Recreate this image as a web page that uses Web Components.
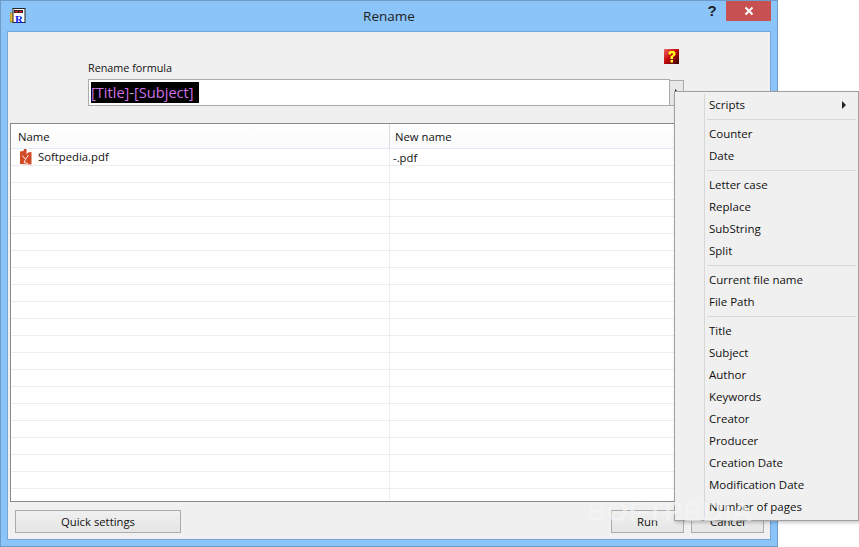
<!DOCTYPE html>
<html>
<head>
<meta charset="utf-8">
<title>Rename</title>
<style>
  html, body { margin: 0; padding: 0; background: #fff; }
  body { width: 859px; height: 547px; overflow: hidden; position: relative; font: 11.3px "Open Sans", "Liberation Sans", sans-serif; color: #111; }
</style>
</head>
<body>
<app-window>
  <title-bar slot="title" caption="Rename"></title-bar>
  <rename-form></rename-form>
  <file-list></file-list>
  <button-bar></button-bar>
</app-window>
<popup-menu>
  <menu-item arrow>Scripts</menu-item>
  <menu-sep></menu-sep>
  <menu-item>Counter</menu-item>
  <menu-item>Date</menu-item>
  <menu-sep></menu-sep>
  <menu-item>Letter case</menu-item>
  <menu-item>Replace</menu-item>
  <menu-item>SubString</menu-item>
  <menu-item>Split</menu-item>
  <menu-sep></menu-sep>
  <menu-item>Current file name</menu-item>
  <menu-item>File Path</menu-item>
  <menu-sep></menu-sep>
  <menu-item>Title</menu-item>
  <menu-item>Subject</menu-item>
  <menu-item>Author</menu-item>
  <menu-item>Keywords</menu-item>
  <menu-item>Creator</menu-item>
  <menu-item>Producer</menu-item>
  <menu-item>Creation Date</menu-item>
  <menu-item>Modification Date</menu-item>
  <menu-item>Number of pages</menu-item>
</popup-menu>
<soft-mark></soft-mark>

<script>
function shadow(el, html) {
  el.attachShadow({ mode: 'open' });
  el.shadowRoot.innerHTML = html;
}

class AppWindow extends HTMLElement {
  connectedCallback() {
    shadow(this, `
      <style>
        :host { display: flex; flex-direction: column; box-sizing: border-box; width: 778px; height: 547px;
                background: #8ac4f9; border: 1px solid #6d9cc8; }
        .client { flex: 1; display: flex; flex-direction: column; margin: 0 6px 6px; background: #f0f0f0;
                  border: 1px solid #74a7d6; min-height: 0; }
      </style>
      <slot name="title"></slot>
      <div class="client"><slot></slot></div>
    `);
  }
}

class TitleBar extends HTMLElement {
  connectedCallback() {
    shadow(this, `
      <style>
        :host { display: flex; align-items: flex-start; height: 30px; position: relative; flex: none; }
        .icon { margin: 7px 0 0 9px; width: 16px; height: 16px; flex: none; }
        .caption { position: absolute; left: 0; width: 776px; top: 5px; text-align: center; font-size: 13.5px; line-height: 20px; color: #222; }
        .help { margin: 0 -1px 0 auto; width: 30px; text-align: center; font: bold 15px/20px "Liberation Sans", sans-serif; color: #222; }
        .close { margin: 0 6px 0 0; width: 45px; height: 20px; background: #c75050; display: flex; align-items: center; justify-content: center; flex: none; }
      </style>
      <svg class="icon" viewBox="0 0 16 16">
        <rect x="0" y="5" width="6" height="9" fill="#e9b93c" stroke="#8a6a10" stroke-width=".6"/>
        <rect x="3" y="0.5" width="12" height="14" fill="#fff" stroke="#222"/>
        <rect x="4" y="2" width="9" height="3" fill="#222"/>
        <rect x="5" y="3" width="3" height="1.4" fill="#e81818"/>
        <rect x="9" y="3" width="3" height="1.4" fill="#e81818"/>
        <text x="5" y="14.5" font-family="Liberation Serif" font-weight="bold" font-size="11" fill="#1020e8">R</text>
      </svg>
      <div class="caption">${this.getAttribute('caption')}</div>
      <div class="help">?</div>
      <div class="close">
        <svg width="10" height="10" viewBox="0 0 10 10"><path d="M1.5 1.5 8.5 8.5M8.5 1.5 1.5 8.5" stroke="#fff" stroke-width="2"/></svg>
      </div>
    `);
  }
}

class RenameForm extends HTMLElement {
  connectedCallback() {
    shadow(this, `
      <style>
        :host { display: block; height: 91px; padding: 17px 0 0 80px; box-sizing: border-box; flex: none; }
        .top { display: flex; height: 30px; width: 592px; justify-content: space-between; }
        .label { align-self: flex-end; line-height: 16px; margin-bottom: 3px; font-size: 10.8px; }
        .help { width: 16px; height: 16px; }
        .row { display: flex; align-items: flex-start; }
        .input { box-sizing: border-box; width: 582px; height: 27px; background: #fff; border: 1px solid #ababab; padding: 2px; }
        .sel { display: inline-block; width: 108px; height: 21px; background: #000; box-sizing: border-box;
               font-size: 14.6px; line-height: 21px; white-space: nowrap; color: #d070e8; }
        .sel i { font-style: normal; color: #b8b8b8; }
        .drop { box-sizing: border-box; width: 14px; height: 26px; margin-top: 1px; border: 1px solid #ababab; border-left: 0; background: #e8e8e8; position: relative; }
        .drop::after { content: ""; position: absolute; left: 5px; top: 8px; border-left: 4px solid #111; border-top: 4px solid transparent; border-bottom: 4px solid transparent; }
      </style>
      <div class="top">
        <div class="label">Rename formula</div>
        <svg class="help" viewBox="0 0 16 16">
          <defs><linearGradient id="g" x1="0" y1="0" x2="1" y2="1">
            <stop offset="0" stop-color="#f06a6a"/><stop offset=".45" stop-color="#c80a0a"/><stop offset="1" stop-color="#300000"/>
          </linearGradient></defs>
          <rect x="0" y="0" width="15" height="15" fill="url(#g)"/>
          <path d="M4.5 5.5V3.5L6 2H10L11.5 3.5V6L9 8V10H6.5V7.5L9 5.5V4.2H7V5.5Z" fill="#ffff20"/>
          <rect x="6.5" y="11" width="2.5" height="2.5" fill="#ffff20"/>
        </svg>
      </div>
      <div class="row">
        <div class="input"><span class="sel">[Title]<i>-</i>[Subject]</span></div>
        <div class="drop"></div>
      </div>
    `);
  }
}

class FileList extends HTMLElement {
  connectedCallback() {
    let rows = `<div class="row"><div class="name"><svg width="13" height="16" viewBox="0 0 13 16">
        <path d="M1 2.5 4.5 2 5 0H7.5V5.5L9 3.5 12.5 3V15.5L1 15Z" fill="#d24a26"/>
        <path d="M3.5 6.5 6.5 10.5 9.5 6M6.5 10.5 5 13.5 9 14.5" stroke="#fff" stroke-width=".9" fill="none"/>
      </svg><span>Softpedia.pdf</span></div><div class="new">-.pdf</div></div>`;
    for (let i = 0; i < 21; i++) {
      rows += '<div class="row"><div class="name"></div><div class="new"></div></div>';
    }
    shadow(this, `
      <style>
        :host { display: block; box-sizing: border-box; width: 754px; height: 379px; margin-left: 2px; flex: none;
                background: #fff; border: 1px solid #8a8a8a; border-right: 0; overflow: hidden; }
        .head { display: grid; grid-template-columns: 378px 1fr; height: 25px; background: linear-gradient(#fff, #fafafa); border-bottom: 1px solid #e3ebf7; box-sizing: border-box; }
        .head div { padding-left: 7px; line-height: 26px; }
        .head div + div { border-left: 1px solid #dcdcdc; padding-left: 5px; }
        .row { display: grid; grid-template-columns: 378px 1fr; height: 17px; box-sizing: border-box; border-bottom: 1px solid #ededed; }
        .name { display: flex; align-items: flex-start; gap: 6px; padding-left: 8px; line-height: 16px; }
        .new { border-left: 1px solid #ededed; padding-left: 3px; line-height: 18px; }
        svg { flex: none; }
      </style>
      <div class="head"><div>Name</div><div>New name</div></div>
      ${rows}
    `);
  }
}

class ButtonBar extends HTMLElement {
  connectedCallback() {
    shadow(this, `
      <style>
        :host { display: flex; flex: 1; padding: 8px 6px 0 7px; gap: 7px; box-sizing: border-box; }
        .spacer { flex: 1; }
      </style>
      <push-button style="width:166px">Quick settings</push-button>
      <div class="spacer"></div>
      <push-button style="width:73px">Run</push-button>
      <push-button style="width:73px">Cancel</push-button>
    `);
  }
}

class PushButton extends HTMLElement {
  connectedCallback() {
    shadow(this, `
      <style>
        :host { display: block; box-sizing: border-box; height: 23px; text-align: center; line-height: 22px;
                border: 1px solid #acacac; background: linear-gradient(#f0f0f0, #e5e5e5); }
      </style>
      <slot></slot>
    `);
  }
}

class PopupMenu extends HTMLElement {
  connectedCallback() {
    shadow(this, `
      <style>
        :host { display: block; position: absolute; left: 674px; top: 91px; width: 185px; box-sizing: border-box;
                padding: 2px; background: #f0f0f0; border: 1px solid #a0a0a0; box-shadow: 1px 2px 3px rgba(0,0,0,.2); font-size: 11.5px; }
        .rail { position: absolute; left: 29px; top: 2px; bottom: 2px; width: 1px; background: #d7d7d7; }
      </style>
      <div class="rail"></div>
      <slot></slot>
    `);
  }
}

class MenuItem extends HTMLElement {
  connectedCallback() {
    shadow(this, `
      <style>
        :host { display: flex; align-items: center; justify-content: space-between; height: 22px; padding: 0 10px 0 32px; line-height: 22px; }
        .arrow { width: 0; height: 0; border-left: 4px solid #222; border-top: 4px solid transparent; border-bottom: 4px solid transparent; }
      </style>
      <slot></slot>
      ${this.hasAttribute('arrow') ? '<div class="arrow"></div>' : ''}
    `);
  }
}

class MenuSep extends HTMLElement {
  connectedCallback() {
    shadow(this, `
      <style>
        :host { display: block; height: 7px; padding: 3px 0 0 30px; box-sizing: border-box; }
        div { height: 1px; background: #d7d7d7; }
      </style>
      <div></div>
    `);
  }
}

class SoftMark extends HTMLElement {
  connectedCallback() {
    shadow(this, `
      <style>
        :host { display: block; position: absolute; left: 587px; top: 494px; pointer-events: none;
                font: bold 28px/36px "Liberation Sans", sans-serif; letter-spacing: .6px; color: rgba(255,255,255,.6);
                text-shadow: 0 0 1px rgba(0,0,0,.06); }
      </style>
      SOFTPEDIA
    `);
  }
}

customElements.define('app-window', AppWindow);
customElements.define('title-bar', TitleBar);
customElements.define('rename-form', RenameForm);
customElements.define('file-list', FileList);
customElements.define('button-bar', ButtonBar);
customElements.define('push-button', PushButton);
customElements.define('popup-menu', PopupMenu);
customElements.define('menu-item', MenuItem);
customElements.define('menu-sep', MenuSep);
customElements.define('soft-mark', SoftMark);
</script>
</body>
</html>
